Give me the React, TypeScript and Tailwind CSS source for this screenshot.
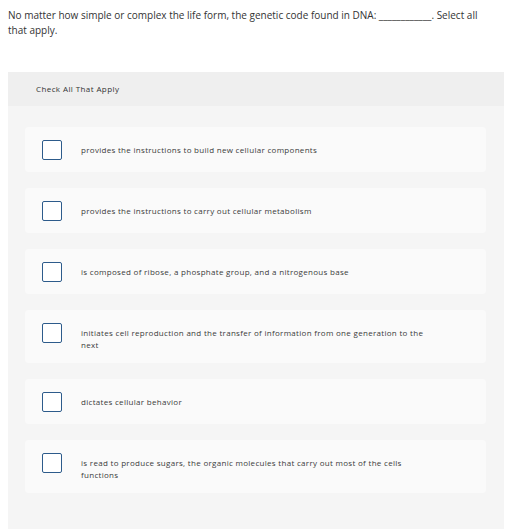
import React from "react";

const OPTIONS = [
  "provides the instructions to build new cellular components",
  "provides the instructions to carry out cellular metabolism",
  "is composed of ribose, a phosphate group, and a nitrogenous base",
  "initiates cell reproduction and the transfer of information from one generation to the next",
  "dictates cellular behavior",
  "is read to produce sugars, the organic molecules that carry out most of the cells functions",
];

export default function App() {
  return (
    <div
      className="min-h-screen bg-white pl-2 pr-1 pt-2 text-[#333]"
      style={{ fontFamily: "'Open Sans', sans-serif" }}
    >
      {/* Question */}
      <p className="text-[10px] leading-[15px] pr-3">
        No matter how simple or complex the life form, the genetic code found in DNA: ____________. Select all that apply.
      </p>

      {/* Answer panel */}
      <div className="mt-[34px] bg-[#f5f5f5] pb-[40px]">
        <div className="h-[34px] bg-[#efefef] pl-[28px] flex items-center text-[8px] tracking-[0.4px] text-[#333]">
          Check All That Apply
        </div>
        <div className="flex flex-col gap-4 pt-[21px] pl-[17px] pr-[18px]">
          {OPTIONS.map((opt) => (
            <div key={opt} className="flex items-start bg-[#fafafa] rounded-sm pt-[13px] pb-[12px] pl-[17px]">
              <span className="w-5 h-5 shrink-0 rounded-[2px] border-[1.5px] border-[#2d5b8b] bg-white" />
              <span className="ml-[19px] w-[348px] pt-[4px] pb-[1px] text-[8px] tracking-[0.3px] leading-[11.5px] text-[#3a3a3a]">
                {opt}
              </span>
            </div>
          ))}
        </div>
      </div>
    </div>
  );
}
